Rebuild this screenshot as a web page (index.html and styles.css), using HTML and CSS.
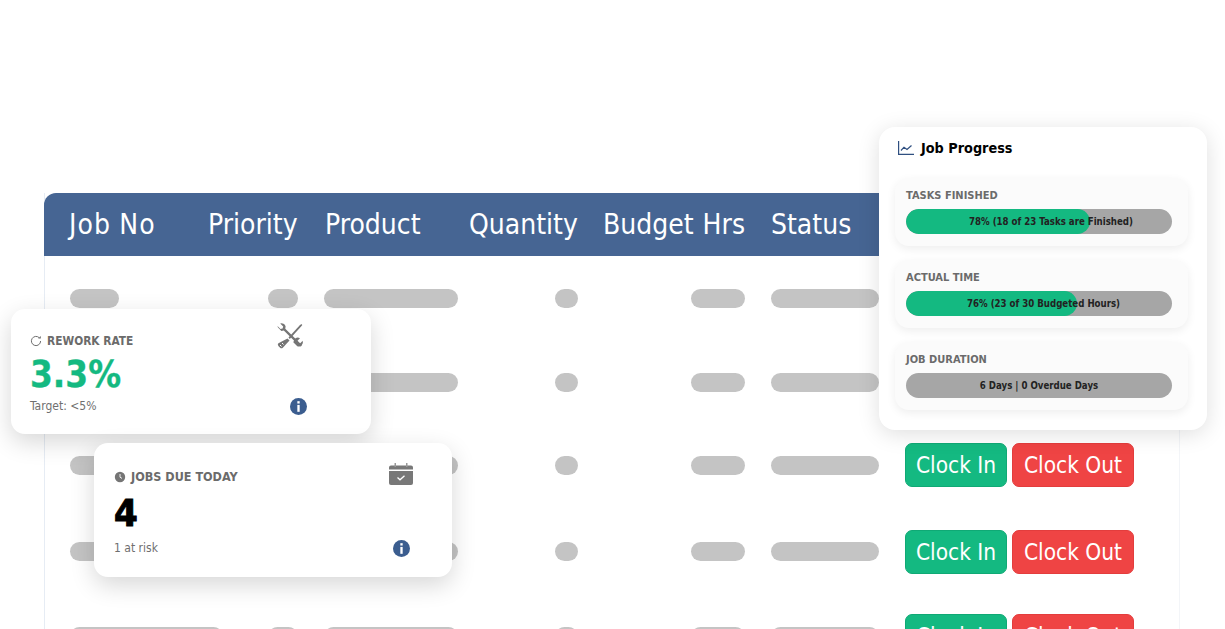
FILE: index.html
```html
<!DOCTYPE html>
<html lang="en">
<head>
<meta charset="utf-8">
<title>Job dashboard</title>
<link rel="stylesheet" href="styles.css">
</head>
<body>
<main class="stage">
  <section class="table">
    <header class="grid head">
      <div class="jobno">Job No</div><div>Priority</div><div>Product</div><div>Quantity</div><div>Budget Hrs</div><div>Status</div><div></div>
    </header>
    <div class="rows">
      <div class="grid row">
        <span class="pill job"></span><span class="pill prio"></span><span class="pill prod"></span><span class="pill qty"></span><span class="pill hrs"></span><span class="pill stat"></span>
      </div>
      <div class="grid row">
        <span class="pill job"></span><span class="pill prio"></span><span class="pill prod"></span><span class="pill qty"></span><span class="pill hrs"></span><span class="pill stat"></span>
      </div>
      <div class="grid row">
        <span class="pill job"></span><span class="pill prio"></span><span class="pill prod"></span><span class="pill qty"></span><span class="pill hrs"></span><span class="pill stat"></span>
        <div class="acts"><button class="btn in">Clock In</button><button class="btn out">Clock Out</button></div>
      </div>
      <div class="grid row">
        <span class="pill job"></span><span class="pill prio"></span><span class="pill prod"></span><span class="pill qty"></span><span class="pill hrs"></span><span class="pill stat"></span>
        <div class="acts"><button class="btn in">Clock In</button><button class="btn out">Clock Out</button></div>
      </div>
      <div class="grid row">
        <span class="pill job long"></span><span class="pill prio"></span><span class="pill prod"></span><span class="pill qty"></span><span class="pill hrs"></span><span class="pill stat"></span>
        <div class="acts"><button class="btn in">Clock In</button><button class="btn out">Clock Out</button></div>
      </div>
    </div>
  </section>

  <aside class="card rework">
    <div class="stat-text">
      <h3 class="stat-title">
        <svg class="mini" viewBox="0 0 12 12"><path d="M10.6 6a4.6 4.6 0 1 1-1.4-3.3" fill="none" stroke="#6f6f6f" stroke-width="1"/><path d="M10.8 .9v2.7H8.100z" fill="#6f6f6f"/></svg>
        REWORK RATE
      </h3>
      <div class="value green">3.3%</div>
      <div class="note">Target: &lt;5%</div>
    </div>
    <div class="stat-icons">
      <svg class="tool" viewBox="0 0 28 28">
        <path d="M2 5.600 5.400 9l2.400-.5L24 24.600a1.500 1.500 0 0 0 1.400-2L9.300 6.800 9.600 4.300A4.300 4.300 0 0 0 4.200 1.400l3 3-.6 2.100-2.100.5-3-3A4 4 0 0 0 2 5.600z" fill="#757575"/>
        <path d="M18.500 17.200a4.300 4.300 0 0 1 5.500-1l-3 3 .6 2.100 2.100.5 3-3a4.300 4.300 0 0 1-5.400 5.500l-4-4z" fill="#757575"/>
        <path d="m11.500 16.500 2 2-6.700 7.200a2 2 0 0 1-2.700 0l-1.700-1.700a2 2 0 0 1 0-2.700z" fill="#757575"/>
        <path d="M12.500 15.500 23.800 3.300l1.500-1.300 1 1-1.200 1.600-11.300 12.400z" fill="#757575"/>
        <path d="m6 21 1.500 1.500M4 23l1.500 1.500" stroke="#fff" stroke-width="1" fill="none"/>
      </svg>
      <svg class="info" viewBox="0 0 16 16"><circle cx="8" cy="8" r="8" fill="#3b5d8f"/><rect x="6.900" y="3" width="2.200" height="2.200" fill="#fff"/><rect x="6.900" y="6.500" width="2.200" height="6.500" fill="#fff"/></svg>
    </div>
  </aside>

  <aside class="card due">
    <div class="stat-text">
      <h3 class="stat-title">
        <svg class="mini" viewBox="0 0 12 12"><circle cx="6" cy="6" r="5.200" fill="#757575"/><path d="M6 3v3.200l2 1.200" fill="none" stroke="#fff" stroke-width=".9"/></svg>
        JOBS DUE TODAY
      </h3>
      <div class="value dark">4</div>
      <div class="note">1 at risk</div>
    </div>
    <div class="stat-icons">
      <svg class="cal" viewBox="0 0 24 24">
        <path d="M2 3.500h20a2 2 0 0 1 2 2V7.500H0V5.500a2 2 0 0 1 2-2z" fill="#787878"/>
        <path d="M0 9h24v12a2 2 0 0 1-2 2H2a2 2 0 0 1-2-2z" fill="#787878"/>
        <rect x="5.500" y="1" width="1.500" height="4" fill="#999"/><rect x="17" y="1" width="1.500" height="4" fill="#999"/>
        <path d="m8.500 15.500 2.500 2.300 4.500-4" fill="none" stroke="#fff" stroke-width="1.300"/>
      </svg>
      <svg class="info" viewBox="0 0 16 16"><circle cx="8" cy="8" r="8" fill="#3b5d8f"/><rect x="6.900" y="3" width="2.200" height="2.200" fill="#fff"/><rect x="6.900" y="6.500" width="2.200" height="6.500" fill="#fff"/></svg>
    </div>
  </aside>

  <aside class="card progress">
    <h2 class="prog-title">
      <svg class="chart" viewBox="0 0 16 14"><path d="M.6 0v13.400H16" fill="none" stroke="#2f4f80" stroke-width="1.200"/><path d="m3 9.500 3-3.300 3 2.300 4.500-4" fill="none" stroke="#2f4f80" stroke-width="1.200"/></svg>
      Job Progress
    </h2>
    <div class="metric">
      <div class="metric-label">TASKS FINISHED</div>
      <div class="bar"><div class="fill fill-tasks"></div><span class="bar-text text-tasks">78% (18 of 23 Tasks are Finished)</span></div>
    </div>
    <div class="metric">
      <div class="metric-label">ACTUAL TIME</div>
      <div class="bar"><div class="fill fill-time"></div><span class="bar-text text-time">76% (23 of 30 Budgeted Hours)</span></div>
    </div>
    <div class="metric">
      <div class="metric-label">JOB DURATION</div>
      <div class="bar"><span class="bar-text">6 Days | 0 Overdue Days</span></div>
    </div>
  </aside>
</main>
</body>
</html>
```

FILE: styles.css
```css
* { box-sizing: border-box; }
html, body { margin: 0; height: 629px; overflow: hidden; background: #fff; }
body { font-family: "DejaVu Sans Condensed", "Noto Sans", "Liberation Sans", sans-serif; }
.stage { position: relative; width: 1225px; height: 629px; padding: 193px 0 0 44px; overflow: hidden; }

.table { width: 1136px; border-left: 1px solid #e6ecf4; border-right: 1px solid #f3f5f8; height: 620px; }
.grid { display: grid; grid-template-columns: 139px 117px 144px 134px 168px 134px 1fr; padding-left: 24px; align-items: center; }
.head { height: 63px; margin-left: -1px; background: #466593; color: #fff; font-size: 28px; word-spacing: 1px; border-radius: 12px 0 0 0; padding-left: 25px; }
.jobno { letter-spacing: 1.100px; word-spacing: -1px; }
.rows { display: grid; grid-template-rows: 84px 84px 82px 91px 78px; }
.pill { display: block; height: 19px; border-radius: 10px; background: #c4c4c4; }
.job { width: 49px; margin-left: 1px; }
.job.long { width: 153px; }
.prio { width: 30px; margin-left: 60px; }
.prod { width: 134px; margin-left: -1px; }
.qty { width: 23px; margin-left: 86px; }
.hrs { width: 54px; margin-left: 88px; }
.stat { width: 108px; }

.acts { display: flex; gap: 5px; }
.btn { height: 44px; border-radius: 7px; border: 1px solid; color: #fff; font: inherit; font-size: 22.500px; padding: 0; }
.in { width: 102px; background: #14b981; border-color: #10a975; }
.out { width: 122px; background: #ef4444; border-color: #e33d3d; }

.card { position: absolute; background: #fff; }
.rework, .due { display: flex; justify-content: space-between; border-radius: 14px; box-shadow: 0 8px 24px rgba(0,0,0,.16); }
.rework { left: 11px; top: 309px; width: 360px; height: 125px; padding: 24px 64.500px 19px 19px; }
.due { left: 94px; top: 443px; width: 358px; height: 134px; padding: 26px 39px 20px 20px; }
.stat-text { display: flex; flex-direction: column; }
.stat-title { display: flex; align-items: center; gap: 5px; margin: 0; font-size: 12.500px; font-weight: 700; color: #6b6b6b; line-height: 16px; }
.rework .stat-title { font-size: 11.800px; }
.mini { width: 12px; height: 12px; }
.value { font-weight: 700; line-height: 44px; }
.green { color: #14b981; font-size: 36.500px; margin-top: 4px; -webkit-text-stroke: .3px #14b981; }
.dark { color: #000; font-size: 38px; margin-top: 6px; -webkit-text-stroke: 1px #000; }
.note { font-size: 12px; color: #6f6f6f; line-height: 16px; margin-top: 1px; }
.due .note { margin-top: 5px; }
.stat-icons { display: flex; flex-direction: column; justify-content: space-between; align-items: center; }
.tool { width: 28px; height: 28px; margin: -11px 0 0 -16px; }
.cal { width: 24px; height: 24px; margin-top: -7px; }
.info { width: 17px; height: 17px; }

.progress { left: 879px; top: 127px; width: 328px; height: 303px; border-radius: 16px; padding: 12px 19px 20px 16px; box-shadow: 0 4px 22px rgba(0,0,0,.13); }
.prog-title { display: flex; align-items: center; gap: 7px; margin: 0 0 21px 3px; font-size: 14.300px; font-weight: 700; color: #000; line-height: 18px; }
.chart { width: 16px; height: 14px; }
.metric { height: 67.500px; margin-bottom: 14.500px; padding: 10.500px 16px 0 11px; background: #fbfbfb; border-radius: 14px; box-shadow: 0 3px 10px rgba(0,0,0,.07); }
.metric-label { font-size: 11px; font-weight: 700; color: #6b6b6b; line-height: 14px; margin-bottom: 6.500px; }
.bar { position: relative; display: flex; align-items: center; justify-content: center; height: 24.500px; border-radius: 13px; background: #a6a6a6; overflow: hidden; }
.fill { position: absolute; left: 0; top: 0; bottom: 0; background: #14b981; border-radius: 13px; }
.fill-tasks { width: 184px; }
.fill-time { width: 171px; }
.bar-text { position: relative; font-size: 9.600px; font-weight: 700; color: #222; }
.text-tasks { margin-left: 24px; }
.text-time { margin-left: 9px; }
```
